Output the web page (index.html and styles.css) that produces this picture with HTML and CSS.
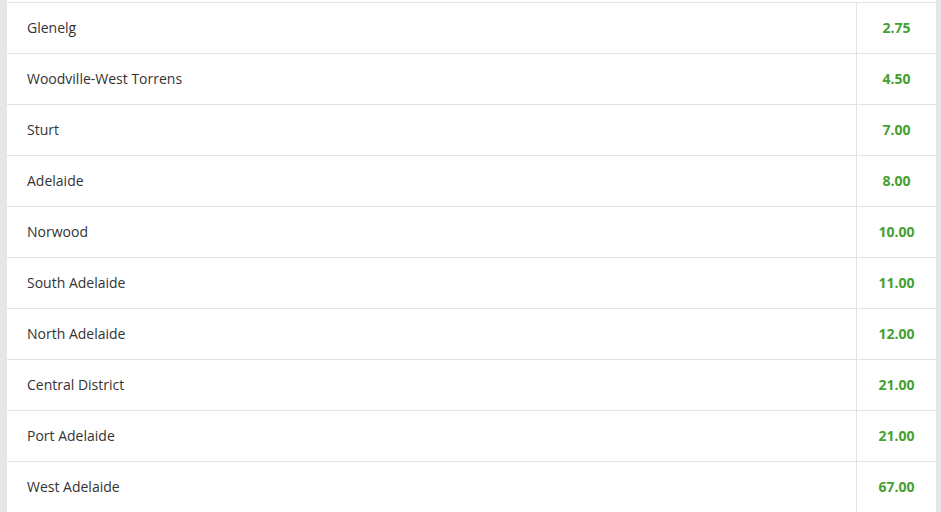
FILE: index.html
```html
<!DOCTYPE html>
<html>
<head>
<meta charset="utf-8">
<link rel="stylesheet" href="styles.css">
</head>
<body>
<div class="panel">
  <div class="row"><div class="name">Glenelg</div><div class="odds">2.75</div></div>
  <div class="row"><div class="name">Woodville-West Torrens</div><div class="odds">4.50</div></div>
  <div class="row"><div class="name">Sturt</div><div class="odds">7.00</div></div>
  <div class="row"><div class="name">Adelaide</div><div class="odds">8.00</div></div>
  <div class="row"><div class="name">Norwood</div><div class="odds">10.00</div></div>
  <div class="row"><div class="name">South Adelaide</div><div class="odds">11.00</div></div>
  <div class="row"><div class="name">North Adelaide</div><div class="odds">12.00</div></div>
  <div class="row"><div class="name">Central District</div><div class="odds">21.00</div></div>
  <div class="row"><div class="name">Port Adelaide</div><div class="odds">21.00</div></div>
  <div class="row"><div class="name">West Adelaide</div><div class="odds">67.00</div></div>
</div>
</body>
</html>
```
FILE: styles.css
```css
html, body {
  margin: 0;
  padding: 0;
  background: #e6e6e6;
}
body {
  font-family: "Open Sans", "Liberation Sans", sans-serif;
  font-size: 14px;
  color: #333;
}
.panel {
  margin: 0 5px 0 7px;
  background: #fff;
  padding-top: 2px;
}
.row {
  display: flex;
  height: 50px;
  border-top: 1px solid #e3e3e3;
}
.name {
  flex: 1;
  display: flex;
  align-items: center;
  padding-left: 20px;
  padding-bottom: 2px;
}
.odds {
  width: 79px;
  border-left: 1px solid #e3e3e3;
  display: flex;
  align-items: center;
  justify-content: center;
  font-weight: 700;
  color: #45a031;
  padding-bottom: 2px;
}
```
